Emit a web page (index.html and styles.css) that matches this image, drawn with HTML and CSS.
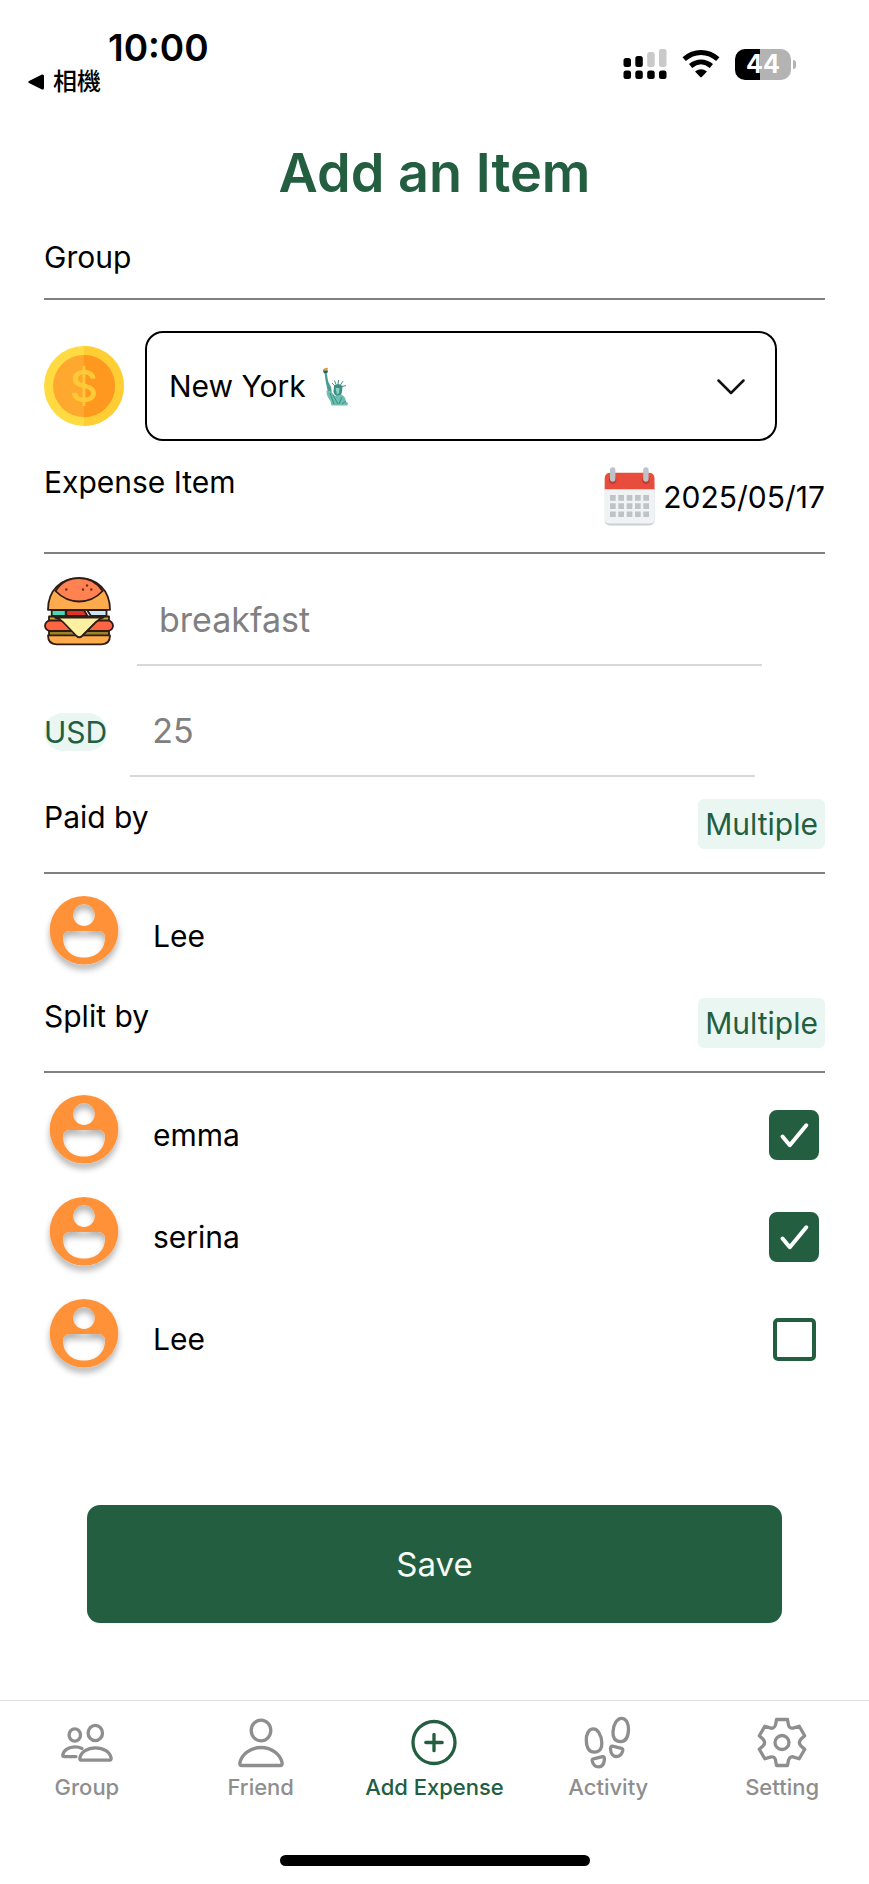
FILE: index.html
```html
<!DOCTYPE html>
<html lang="en">
<head>
<meta charset="utf-8">
<meta name="viewport" content="width=device-width, initial-scale=1">
<title>Add an Item</title>
<link rel="stylesheet" href="styles.css">
</head>
<body>
<svg class="defs" aria-hidden="true">
  <defs>
    <filter id="avatar-shadow" x="-20%" y="-20%" width="140%" height="150%">
      <feDropShadow dx="0" dy="5" stdDeviation="3" flood-color="#000" flood-opacity="0.3"/>
    </filter>
    <symbol id="avatar" viewBox="0 0 80 80">
      <path fill="#ff9238" fill-rule="evenodd" filter="url(#avatar-shadow)" d="M40 0a34.300 34.300 0 0 1 0 68.600a34.300 34.300 0 0 1 0-68.600zM40 8.300a10.800 10.800 0 0 0 0 21.600a10.800 10.800 0 0 0 0-21.600zM25.500 35h29q6.500.5 6.500 6.500C61 54 52 61.500 40 61.500S19 54 19 41.500q0-6 6.500-6.500z"/>
    </symbol>
    <symbol id="tick" viewBox="0 0 50 50">
      <path fill="none" stroke="#fff" stroke-width="4" stroke-linecap="round" stroke-linejoin="round" d="M13.500 26.500l7.300 8.700L37.300 15.300"/>
    </symbol>
  </defs>
</svg>
<div class="screen">
  <header class="status">
    <div class="status-left">
      <div class="time">10:00</div>
      <a class="back" href="#"><svg width="16" height="16" viewBox="0 0 16 16" aria-hidden="true"><path d="M1 7L14 .500q2-.500 2 1.500v12q0 2-2 1.500L1 9q-1.500-1 0-2z"/></svg>相機</a>
    </div>
    <div class="status-right">
      <svg width="44" height="32" viewBox="0 0 44 32" aria-hidden="true">
        <g fill="#000">
          <rect x="0.500" y="10" width="7.500" height="9" rx="2.500"/><rect x="12.300" y="8" width="7.500" height="11" rx="2.500"/>
          <rect x="0.500" y="22.500" width="7.500" height="8.500" rx="2.500"/><rect x="12.300" y="22.500" width="7.500" height="8.500" rx="2.500"/><rect x="24.200" y="22.500" width="7.500" height="8.500" rx="2.500"/><rect x="36" y="22.500" width="7.500" height="8.500" rx="2.500"/>
        </g>
        <rect x="24.200" y="4" width="7.500" height="15" rx="2.500" fill="#c9c9c9"/><rect x="36" y="1" width="7.500" height="18" rx="2.500" fill="#c9c9c9"/>
      </svg>
      <svg width="38" height="32" viewBox="0 0 38 32" aria-hidden="true">
        <g fill="none" stroke="#000" stroke-width="5">
          <path d="M2.200 11.200C12 2.300 26 2.300 35.800 11.200"/><path d="M8.600 18C15 12.600 23 12.600 29.400 18"/>
        </g>
        <path d="M13 23.500q6-4.600 12 0l-5 5.300q-1 1-2 0z"/>
      </svg>
      <div class="battery"><span class="charge">44</span></div>
    </div>
  </header>

  <main class="content">
    <h1 class="title">Add an Item</h1>

    <div class="head"><label for="group">Group</label></div>
    <div class="group-row">
      <svg class="coin" width="80" height="80" viewBox="0 0 80 80" aria-hidden="true">
        <circle cx="40" cy="40" r="40" fill="#ffdb41"/><path fill="#ffcd34" d="M40 0a40 40 0 0 1 0 80z"/>
        <circle cx="40" cy="40" r="31" fill="#ffa82f"/><path fill="#ff981f" d="M40 9a31 31 0 0 1 0 62z"/>
        <text class="coin-sign" x="40" y="56" text-anchor="middle">$</text>
      </svg>
      <div class="select-box">
        <select id="group"><option>New York</option></select>
        <svg class="statue" width="27" height="39" viewBox="0 0 27 39" aria-hidden="true">
          <path fill="#d9a23c" d="M1 2.500Q3 .200 6 1L5.200 3.800H1.500z"/>
          <path fill="#28625f" d="M.8 3.600H6L5.300 6.200H2z"/>
          <path fill="#4a9c92" d="M2.600 6h2L6.200 14.500l3 6 .5 5-4-1.500L3.600 14z"/>
          <path stroke="#357f78" stroke-width=".9" fill="none" d="M13 19l-3-3M14 17.500L12.500 13.500M16 17l.6-4M18.500 17.800l2.500-3.600M20 19.500l4-1"/>
          <path fill="#3c8f86" d="M12 19q4-4 8.500 0l-.5 6q-1 4-4 4.500-4-1-4.500-5z"/>
          <path fill="#8bd0c2" d="M13.500 21h4l-.5 5-2 1.500z"/>
          <path fill="#6cbfb0" d="M4.500 23.500l5 1.500 3.500 4 6.500-1.500q4 2 4.500 7l2 1.500-.5 2.500H9.500L8.500 34q-4-4-4-10.500z"/>
          <path stroke="#2f7d76" stroke-width=".8" fill="none" d="M8 26l4 11M11 28l5 9M20 30l-3 7M24 34l-4 3"/>
        </svg>
        <svg class="chevron" width="28" height="16" viewBox="0 0 28 16" aria-hidden="true"><path fill="none" stroke="#111" stroke-width="2.500" stroke-linecap="round" stroke-linejoin="round" d="M1.500 1.500L14 14 26.500 1.500"/></svg>
      </div>
    </div>

    <div class="head">
      <label for="item">Expense Item</label>
      <button class="date" type="button">
        <svg width="51" height="60" viewBox="0 0 51 60" aria-hidden="true">
          <rect x="0.700" y="14" width="49.800" height="44.500" rx="5" fill="#c9d0d6"/>
          <path fill="#f0f3f4" d="M.7 21h49.800v31q0 4.500-5 4.500H5.700q-5 0-5-4.500z"/>
          <path fill="#e74c3c" d="M.7 22.300V11.500q0-5.800 6-5.800h37.800q6 0 6 5.800v10.800z"/>
          <g fill="#b83b32"><circle cx="8.700" cy="13" r="3.700"/><circle cx="41.900" cy="13" r="3.700"/></g>
          <g fill="#bdc3c7"><rect x="6" y="0.300" width="5.400" height="14.500" rx="2.700"/><rect x="39.200" y="0.300" width="5.400" height="14.500" rx="2.700"/>
          <path d="M6 28h5.700v5.700H6zM14.300 28H20v5.700h-5.700zM22.700 28h5.700v5.700h-5.700zM31 28h5.700v5.700H31zM39.300 28H45v5.700h-5.700zM6 36.200h5.700v5.700H6zM14.300 36.200H20v5.700h-5.700zM22.700 36.200h5.700v5.700h-5.700zM31 36.200h5.700v5.700H31zM39.300 36.200H45v5.700h-5.700zM6 44.400h5.700v5.700H6zM14.300 44.400H20v5.700h-5.700zM22.700 44.400h5.700v5.700h-5.700zM31 44.400h5.700v5.700H31zM39.300 44.400H45v5.700h-5.700z"/></g>
        </svg>
        2025/05/17
      </button>
    </div>

    <div class="field field-item">
      <svg class="burger" width="70" height="72" viewBox="0 0 70 72" aria-hidden="true">
        <g stroke="#2e1c17" stroke-width="1.800" stroke-linejoin="round">
          <path fill="#c9a83a" d="M5 41.500h60v5H5z"/>
          <path fill="#9c8425" d="M5 55h60v6H5z"/>
          <path fill="#45d9b8" d="M7.700 35h14v6h-14z"/><path fill="#dd3427" d="M22.300 35H40l3.500 6H22.300z"/><path fill="#c6e6f8" d="M43 35h19.500v6H47z"/>
          <path fill="#fdab4d" d="M4 34.800C4 15 17 3.200 35 3.200S66 15 66 34.800z"/>
          <path fill="#ff8250" d="M11.500 16C17 7.500 25.500 3.200 35 3.200S53 7.500 58.700 16C45.500 30 25 30 11.500 16z"/>
          <rect x="1" y="45.500" width="68" height="10.500" rx="5.200" fill="#ff6543"/>
          <path fill="#fdab4d" d="M4 60.300h62q0 9-8.500 9h-45Q4 69.300 4 60.300z"/>
          <path fill="#fdf0a0" d="M11 42.500h48.500q-4 1-7.500 4.500L38 61q-2.700 2.500-5.500 0L19 47q-3.500-3.500-8-4.500z"/>
        </g>
        <g fill="#6b2d1c"><circle cx="22.300" cy="14.500" r="1.200"/><circle cx="39" cy="14.500" r="1.200"/><circle cx="43" cy="10.500" r="1.200"/><circle cx="47.300" cy="14.500" r="1.200"/></g>
      </svg>
      <input id="item" type="text" placeholder="breakfast">
    </div>
    <div class="field field-amount">
      <label class="currency" for="amount">USD</label>
      <input id="amount" type="text" inputmode="decimal" placeholder="25">
    </div>

    <div class="head"><span>Paid by</span><button class="multiple" type="button">Multiple</button></div>
    <ul class="members">
      <li class="member"><svg width="80" height="80" aria-hidden="true"><use href="#avatar"/></svg><span class="name">Lee</span></li>
    </ul>

    <div class="head"><span>Split by</span><button class="multiple" type="button">Multiple</button></div>
    <ul class="members">
      <li class="member"><svg width="80" height="80" aria-hidden="true"><use href="#avatar"/></svg><label class="name" for="m1">emma</label><span class="check"><input id="m1" type="checkbox" checked><svg class="tick" aria-hidden="true"><use href="#tick"/></svg></span></li>
      <li class="member"><svg width="80" height="80" aria-hidden="true"><use href="#avatar"/></svg><label class="name" for="m2">serina</label><span class="check"><input id="m2" type="checkbox" checked><svg class="tick" aria-hidden="true"><use href="#tick"/></svg></span></li>
      <li class="member"><svg width="80" height="80" aria-hidden="true"><use href="#avatar"/></svg><label class="name" for="m3">Lee</label><span class="check"><input id="m3" type="checkbox"><svg class="tick" aria-hidden="true"><use href="#tick"/></svg></span></li>
    </ul>
  </main>

  <button class="save" type="button">Save</button>

  <footer class="bottom">
    <nav class="tabs">
      <a class="tab" href="#"><svg class="icon" viewBox="0 0 56 56" aria-hidden="true"><ellipse cx="36.300" cy="19" rx="7.200" ry="7.600"/><path d="M22.500 46.200h27.500q2.200 0 2.200-2C51 38 44.500 33.800 36.500 33.800S22 38 20.800 44.200q0 2 1.700 2z"/><ellipse cx="15.800" cy="21" rx="5.700" ry="6.200"/><path d="M23 34.400c-2-1-4.500-1.600-7-1.600-6.500 0-11.400 3.700-12.200 8.200q0 1.600 1.600 1.600H17"/></svg>Group</a>
      <a class="tab" href="#"><svg class="icon" viewBox="0 0 56 56" aria-hidden="true"><ellipse cx="28" cy="16.500" rx="9.800" ry="10.300"/><path d="M8.800 51.500h38.400q2 0 2-2C48 40.500 38.500 33.500 28 33.500S8 40.500 6.800 49.500q0 2 2 2z"/></svg>Friend</a>
      <a class="tab active" href="#" aria-current="page"><svg class="icon" viewBox="0 0 56 56" aria-hidden="true"><circle cx="28" cy="28.500" r="21"/><path d="M19.800 28.500h16.400M28 20.300v16.400"/></svg>Add Expense</a>
      <a class="tab" href="#"><svg class="icon" viewBox="0 0 56 56" aria-hidden="true"><path d="M12.800 14.900C8.500 15.300 6 20.500 6.300 26.500 6.600 33.500 9 38.300 14.500 38.200 20 38.100 22.200 34 21.800 28.500 21.300 20.500 17.500 14.500 12.800 14.900z"/><path d="M13.500 44.800l9-2.200q2.100-.2 1.900 2.900c-.4 4.500-2.400 7.300-5.600 7.300s-5.800-2.300-6.600-5.800q-.3-1.800 1.300-2.200z"/><path d="M42 4.300c4.300.4 6.800 5.600 6.500 11.600-.3 7-2.700 11.800-8.200 11.700-5.500-.1-7.700-4.200-7.300-9.700C33.500 9.900 37.300 3.900 42 4.300z"/><path d="M32.500 32.200l9 2.200q1.600.6 1.200 2.400c-.9 3.500-3.200 5.700-6.400 5.700s-5.600-3-5.800-7.500q-.1-3 2-2.800z"/></svg>Activity</a>
      <a class="tab" href="#"><svg class="icon" viewBox="0 0 56 56" aria-hidden="true"><g transform="translate(28 28.500)"><path d="M-5.500-23h11L6.500-17.500Q7-15 9-14.500T11.800-14.600L17.200-16.300 22.700-6.700 18.800-3.200Q16-0 18.800 3.200L22.700 6.700 17.200 16.300 11.800 14.600Q10.500 14 9 14.500T6.500 17.500L5.500 23h-11L-6.500 17.500Q-7 15-9 14.500T-11.800 14.600L-17.200 16.300-22.700 6.700-18.800 3.200Q-16 0-18.800-3.200L-22.700-6.700-17.200-16.300-11.800-14.600Q-10.500-14-9-14.500T-6.500-17.500z"/><circle r="7"/></g></svg>Setting</a>
    </nav>
    <div class="home-bar"></div>
  </footer>
</div>
</body>
</html>
```
FILE: styles.css
```css
* {
  box-sizing: border-box;
}

body {
  margin: 0;
  background: #fff;
  color: #000;
  font-family: Inter, "Noto Sans CJK TC", sans-serif;
  font-size: 30px;
  line-height: 36px;
}

button,
input,
select {
  margin: 0;
  padding: 0;
  border: 0;
  background: none;
  color: inherit;
  font: inherit;
}

a {
  color: inherit;
  text-decoration: none;
}

svg {
  display: block;
  flex: none;
}

.defs {
  position: absolute;
  width: 0;
  height: 0;
}

.screen {
  display: flex;
  flex-direction: column;
  min-height: 100vh;
}

/* Status bar */
.status {
  display: flex;
  justify-content: space-between;
  align-items: flex-start;
  padding: 26px 73px 0 28px;
}

.time {
  padding-left: 80px;
  font-size: 37px;
  font-weight: 600;
  line-height: 44px;
}

.back {
  display: flex;
  align-items: center;
  gap: 9px;
  font-size: 24px;
  font-weight: 500;
  line-height: 24px;
}

.status-right {
  display: flex;
  align-items: center;
  gap: 15px;
  padding-top: 22px;
}

.battery {
  display: flex;
  align-items: center;
  gap: 2px;
}

.battery::after {
  content: "";
  width: 3px;
  height: 9px;
  border-radius: 0 4px 4px 0;
  background: #b3b3b3;
}

.charge {
  width: 56px;
  border-radius: 10px;
  background: linear-gradient(90deg, #000 45%, #b3b3b3 45%);
  color: #fff;
  font-size: 25px;
  font-weight: 700;
  line-height: 31px;
  text-align: center;
}

/* Form */
.content {
  padding: 45px 44px 0;
}

.title {
  margin: 0 0 32px;
  color: #235e41;
  font-size: 54px;
  font-weight: 600;
  line-height: 68px;
  text-align: center;
}

.head {
  display: flex;
  justify-content: space-between;
  align-items: flex-start;
  padding-bottom: 23px;
  border-bottom: 2px solid #808080;
}

.group-row {
  display: flex;
  align-items: center;
  gap: 21px;
  margin: 31px 48px 23px 0;
}

.coin-sign {
  fill: #ffc937;
  font-size: 44px;
  font-weight: 500;
}

.select-box {
  position: relative;
  flex: 1;
}

.select-box select {
  display: block;
  width: 100%;
  height: 110px;
  padding: 0 64px 0 22px;
  border: 2px solid #000;
  border-radius: 18px;
  appearance: none;
}

.statue {
  position: absolute;
  top: 36px;
  left: 177px;
  pointer-events: none;
}

.chevron {
  position: absolute;
  top: 48px;
  right: 32px;
  pointer-events: none;
}

.date {
  display: flex;
  align-items: center;
  gap: 8px;
  height: 65px;
}

.field {
  display: flex;
  align-items: center;
  gap: 23px;
}

.field input {
  flex: 0 0 80%;
  width: 80%;
  height: 91px;
  padding: 0 22px;
  border-bottom: 2px solid #d8d8d8;
  font-size: 34px;
}

.field input::placeholder {
  color: #808080;
  opacity: 1;
}

.field-item {
  margin: 21px 0 20px;
}

.field-amount {
  margin-bottom: 22px;
}

.burger {
  align-self: flex-start;
}

.currency {
  border-radius: 19px;
  background: #e9f6f1;
  color: #235e41;
  line-height: 38px;
}

.multiple {
  padding: 0 7px;
  border-radius: 6px;
  background: #e9f6f1;
  color: #235e41;
  line-height: 50px;
}

.members {
  margin: 0;
  padding: 11px 0;
  list-style: none;
}

.member {
  display: flex;
  align-items: center;
  height: 102px;
  padding-right: 6px;
}

.name {
  flex: 1;
  padding-left: 29px;
}

.check {
  position: relative;
  display: grid;
  place-items: center;
  width: 50px;
  height: 50px;
}

.check input {
  width: 43px;
  height: 43px;
  border: 4px solid #235e41;
  border-radius: 5px;
  appearance: none;
}

.check input:checked {
  width: 50px;
  height: 50px;
  border-radius: 8px;
  background: #235e41;
}

.tick {
  position: absolute;
  inset: 0;
  width: 50px;
  height: 50px;
  visibility: hidden;
  pointer-events: none;
}

input:checked + .tick {
  visibility: visible;
}

.save {
  width: 80%;
  height: 118px;
  margin: 104px auto 77px;
  border-radius: 13px;
  background: #235e41;
  color: #f8fcf6;
  font-size: 33px;
}

/* Bottom navigation */
.bottom {
  margin-top: auto;
  padding: 13px 0 18px;
  border-top: 1px solid #e0e0e0;
}

.tabs {
  display: grid;
  grid-template-columns: repeat(5, 1fr);
}

.tab {
  display: flex;
  flex-direction: column;
  align-items: center;
  gap: 3px;
  color: #8e8e8f;
  font-size: 22px;
  font-weight: 500;
  line-height: 28px;
  white-space: nowrap;
}

.tab.active {
  color: #235e41;
}

.icon {
  width: 56px;
  height: 56px;
  fill: none;
  stroke: currentColor;
  stroke-width: 3.3;
  stroke-linecap: round;
  stroke-linejoin: round;
}

.home-bar {
  width: 310px;
  height: 11px;
  margin: 54px auto 0;
  border-radius: 6px;
  background: #000;
}
```
